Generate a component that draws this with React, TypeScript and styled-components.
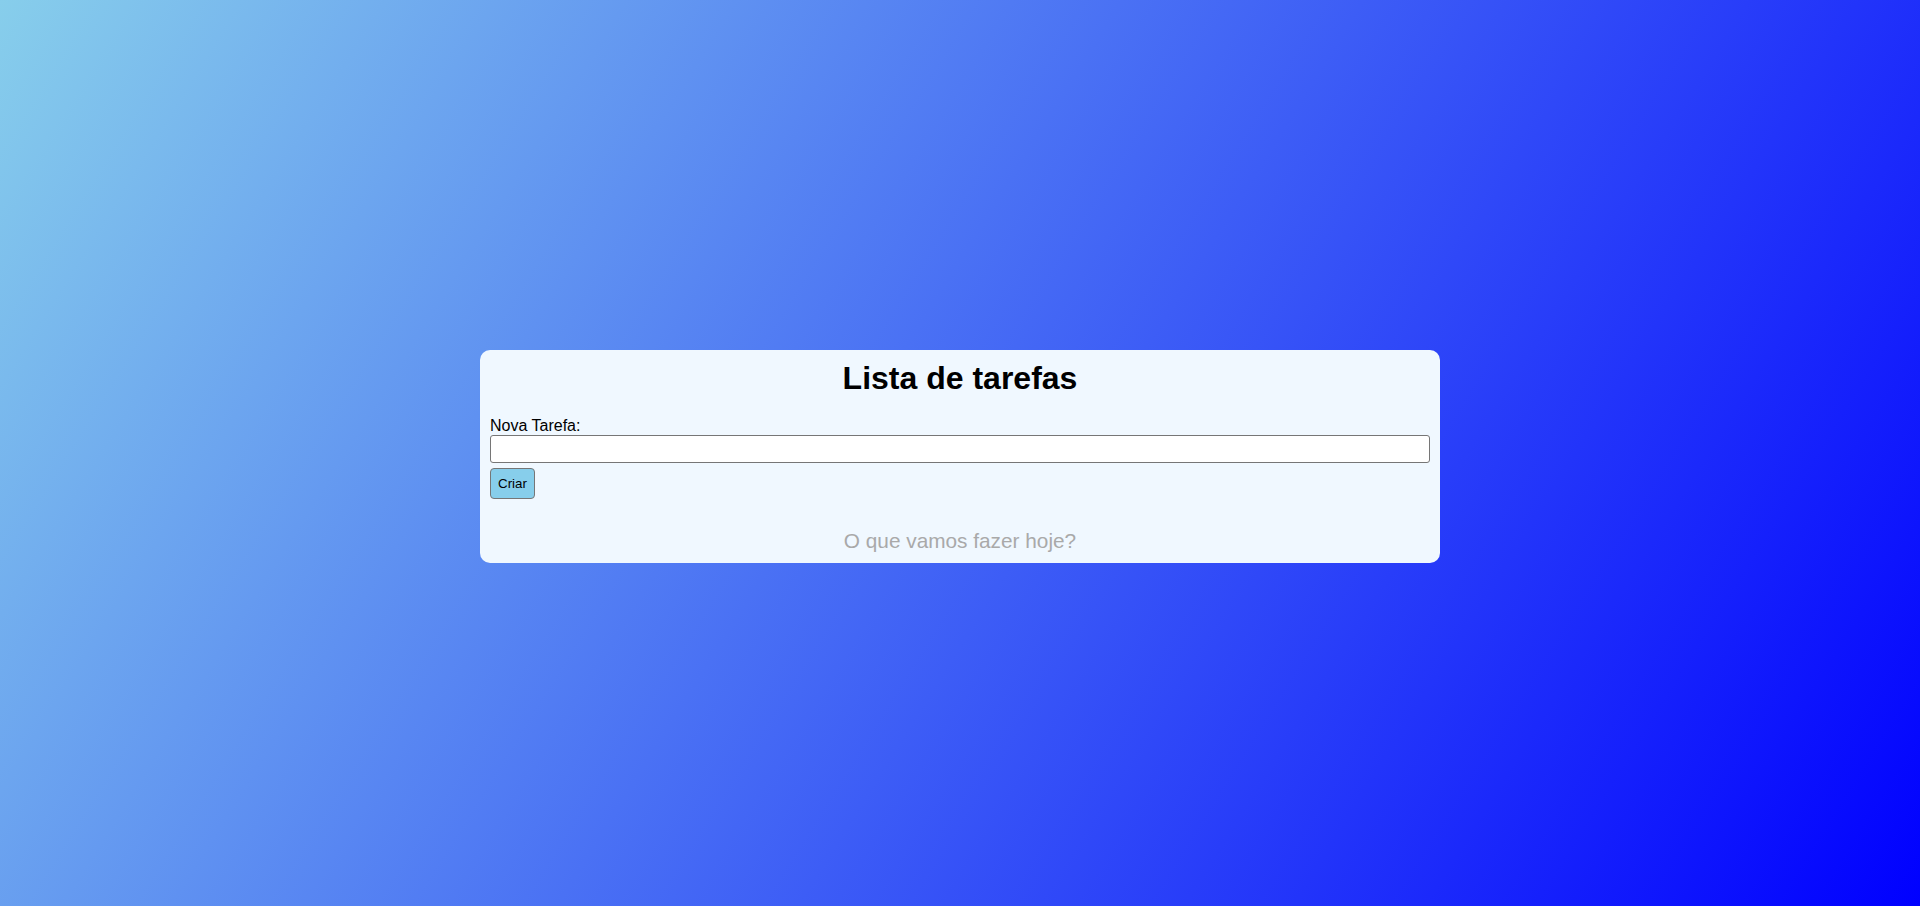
import React, { useState } from "react";
import styled, { createGlobalStyle } from "styled-components";

const Global = createGlobalStyle`
  html, body { margin: 0; padding: 0; }
  body {
    font-family: "Liberation Sans", Arial, sans-serif;
    background: linear-gradient(122deg, #87ceeb, #0000ff);
    min-height: 100vh;
  }
  * { box-sizing: border-box; }
`;

const Page = styled.div`
  min-height: 100vh;
  display: flex;
  align-items: center;
  justify-content: center;
  padding-top: 7px;
`;

const Card = styled.div`
  width: 960px;
  background: #f0f8ff;
  border-radius: 10px;
  padding: 10px;
  display: flex;
  flex-direction: column;
`;

const Title = styled.h1`
  margin: 0 0 20px;
  font-size: 32px;
  line-height: 37px;
  font-weight: bold;
  text-align: center;
  color: #000;
`;

const Form = styled.form`
  display: flex;
  flex-direction: column;
  align-items: flex-start;
`;

const Label = styled.label`
  font-size: 16px;
  line-height: 18px;
  color: #000;
`;

const Input = styled.input`
  width: 100%;
  height: 28px;
  margin-top: 0;
  border: 1px solid #767676;
  border-radius: 3px;
  background: #fff;
  font-size: 16px;
  font-family: inherit;
  padding: 2px 6px;
`;

const Button = styled.button`
  margin-top: 5px;
  height: 31px;
  padding: 0 7px;
  background: #87ceeb;
  border: 1px solid #767676;
  border-radius: 4px;
  font-family: inherit;
  font-size: 13.33px;
  color: #000;
`;

const Empty = styled.p`
  margin: 30px 0 0;
  font-size: 20.8px;
  line-height: 24px;
  text-align: center;
  color: #a9a9a9;
`;

export default function App() {
  const [value, setValue] = useState("");
  return (
    <>
      <Global />
      <Page>
        <Card>
          <Title>Lista de tarefas</Title>
          <Form onSubmit={(e) => e.preventDefault()}>
            <Label htmlFor="nova">Nova Tarefa:</Label>
            <Input id="nova" value={value} onChange={(e) => setValue(e.target.value)} />
            <Button type="submit">Criar</Button>
          </Form>
          <Empty>O que vamos fazer hoje?</Empty>
        </Card>
      </Page>
    </>
  );
}
